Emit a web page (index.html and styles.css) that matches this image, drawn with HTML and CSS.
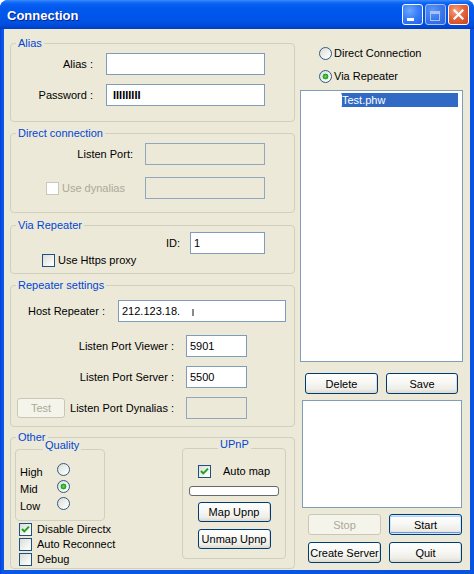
FILE: index.html
```html
<!DOCTYPE html>
<html>
<head>
<meta charset="utf-8">
<title>Connection</title>
<link rel="stylesheet" href="styles.css">
</head>
<body>
<div class="window">
  <div class="titlebar">
    <span class="title">Connection</span>
    <div class="tbtns">
      <span class="tbtn min"><svg width="19" height="19" viewBox="0 0 19 19"><rect x="4" y="13" width="7" height="3" fill="#fff"/></svg></span>
      <span class="tbtn max"><svg width="19" height="19" viewBox="0 0 19 19"><rect x="4.5" y="6.5" width="9" height="9" fill="none" stroke="#A9C2F2" stroke-width="1"/><rect x="4" y="6" width="10" height="3" fill="#A9C2F2"/></svg></span>
      <span class="tbtn close"><svg width="19" height="19" viewBox="0 0 19 19"><path d="M5.5 5.5 L13.5 13.5 M13.5 5.5 L5.5 13.5" stroke="#fff" stroke-width="2.2" stroke-linecap="square"/></svg></span>
    </div>
  </div>
  <div class="client">
    <div class="leftcol">
      <fieldset class="grp g-alias">
        <legend>Alias</legend>
        <div class="form f-alias">
          <span class="lbl">Alias :</span><div class="edit"></div>
          <span class="lbl">Password :</span><div class="edit"><span class="pw">IIIIIIIII</span></div>
        </div>
      </fieldset>
      <fieldset class="grp g-direct">
        <legend>Direct connection</legend>
        <div class="form f-direct">
          <span class="lbl">Listen Port:</span><div class="edit dis"></div>
          <label class="cb dis dyn"><span class="chk dis"></span>Use dynalias</label><div class="edit dis"></div>
        </div>
      </fieldset>
      <fieldset class="grp g-via">
        <legend>Via Repeater</legend>
        <div class="form f-via">
          <span class="lbl">ID:</span><div class="edit">1</div>
          <label class="cb https"><span class="chk"></span>Use Https proxy</label>
        </div>
      </fieldset>
      <fieldset class="grp g-rep">
        <legend>Repeater settings</legend>
        <div class="form f-host">
          <span class="lbl">Host Repeater :</span><div class="edit">212.123.18.<span class="ghost"></span></div>
        </div>
        <div class="form f-ports">
          <span class="lbl">Listen Port Viewer :</span><div class="edit">5901</div>
          <span class="lbl">Listen Port Server :</span><div class="edit">5500</div>
          <div class="dynrow"><button class="btn test" disabled>Test</button><span class="lbl">Listen Port Dynalias :</span></div><div class="edit dis"></div>
        </div>
      </fieldset>
      <fieldset class="grp g-other">
        <legend>Other</legend>
        <div class="other-body">
          <div class="other-left">
            <fieldset class="sub q">
              <legend>Quality</legend>
              <div class="qgrid">
                <span>High</span><span class="rad"></span>
                <span>Mid</span><span class="rad on"></span>
                <span>Low</span><span class="rad"></span>
              </div>
            </fieldset>
            <div class="checks">
              <label class="cb"><span class="chk"><svg width="11" height="11" viewBox="0 0 11 11"><path d="M2 5 L4.3 7.4 L9 2.6" fill="none" stroke="#21A121" stroke-width="2"/></svg></span>Disable Directx</label>
              <label class="cb"><span class="chk"></span>Auto Reconnect</label>
              <label class="cb"><span class="chk"></span>Debug</label>
            </div>
          </div>
          <fieldset class="sub upnp">
            <legend>UPnP</legend>
            <div class="upnp-body">
              <label class="cb automap"><span class="chk"><svg width="11" height="11" viewBox="0 0 11 11"><path d="M2 5 L4.3 7.4 L9 2.6" fill="none" stroke="#21A121" stroke-width="2"/></svg></span>Auto map</label>
              <div class="prog"></div>
              <button class="btn map">Map Upnp</button>
              <button class="btn unmap">Unmap Upnp</button>
            </div>
          </fieldset>
        </div>
      </fieldset>
    </div>
    <div class="rightcol">
      <label class="rb"><span class="rad"></span>Direct Connection</label>
      <label class="rb"><span class="rad on"></span>Via Repeater</label>
      <div class="list"><div class="sel"><span class="blot"></span>Test.phw</div></div>
      <div class="brow r1"><button class="btn w73">Delete</button><button class="btn w72">Save</button></div>
      <div class="log"></div>
      <div class="brow r2"><button class="btn w73" disabled>Stop</button><button class="btn w73 def">Start</button></div>
      <div class="brow r3"><button class="btn w73">Create Server</button><button class="btn w73">Quit</button></div>
    </div>
  </div>
</div>
</body>
</html>
```
FILE: styles.css
```css
* { box-sizing: border-box; }
html, body { margin: 0; padding: 0; background: #ffffff; }
body { font-family: "Liberation Sans", Arial, sans-serif; font-size: 11px; color: #000; }

.btn {
  display: flex; align-items: center; justify-content: center;
  height: 21px; padding: 0; margin: 0;
  font: inherit; color: #000; white-space: nowrap;
  border: 1px solid #003C74; border-radius: 3px;
  background: linear-gradient(to bottom, #FFFFFF 0%, #F7F7F4 45%, #EEEDE7 80%, #DCD8CE 100%);
  box-shadow: inset -1px -1px 0 #E0DCD2;
}
.btn:disabled { color: #ACA899; border-color: #C9C7BA; background: #F5F4EA; box-shadow: none; }
.btn.def { box-shadow: inset 0 0 0 1px #CEE7FF, inset 0 -1px 0 1px #6D94E8, inset 0 1px 0 1px #B8D0F8; }
.w73 { width: 73px; }
.w72 { width: 72px; }

.window {
  width: 474px; height: 574px;
  background: linear-gradient(to right, #0831D9 0, #0A52E0 1px, #0A58E8 3px, #0A52E0 474px);
  border-radius: 8px 8px 0 0;
  display: flex; flex-direction: column; overflow: hidden;
}
.titlebar {
  height: 29px; flex: none;
  display: flex; align-items: flex-start;
  padding: 0 5px 0 7px;
  background: linear-gradient(to bottom, #3D8CFF 0, #1670F8 2px, #0860F2 4px, #0058EE 8px, #0055E8 18px, #004FDF 24px, #0045D2 27px, #003CC2 29px);
}
.title {
  flex: 1; margin-top: 3px; line-height: 26px;
  font-size: 13px; font-weight: bold; color: #fff;
  text-shadow: 1px 1px 0 #0A1E8C;
}
.tbtns { display: flex; gap: 2px; margin-top: 4px; }
.tbtn { display: block; width: 21px; height: 21px; border: 1px solid #fff; border-radius: 3px; }
.tbtn svg { display: block; }
.min { background: radial-gradient(circle at 35% 30%, #6BA8FF 0, #3B80F8 45%, #1F5EE6 100%); }
.max { border-color: #A8C0EE; background: radial-gradient(circle at 35% 30%, #5E98F8 0, #3A78EE 50%, #2A62DE 100%); }
.close { background: radial-gradient(circle at 35% 30%, #F4A282 0, #E5643C 45%, #C9421D 100%); }

.client {
  flex: 1; margin: 0 4px 4px;
  background: #ECE9D8;
  display: grid; grid-template-columns: 285px 163px; column-gap: 5px;
  padding-left: 6px; align-items: start;
}

.leftcol { display: flex; flex-direction: column; padding-top: 8px; }

fieldset { margin: 0; padding: 0; min-width: 0; }
.grp { border: 1px solid #D0D0BF; border-radius: 4px; }
.grp > legend { margin-left: 5px; padding: 0 2px; line-height: 13px; color: #0046D5; }
.g-alias { height: 85px; }
.g-direct { height: 86px; margin-top: 5px; }
.g-via { height: 55px; margin-top: 6px; }
.g-rep { height: 148px; margin-top: 5px; }
.g-other { height: 138px; margin-top: 4px; }

.form { display: grid; align-items: center; }
.lbl { text-align: right; white-space: nowrap; }
.edit {
  height: 22px; border: 1px solid #7F9DB9; background: #fff;
  padding: 0 3px; line-height: 20px; white-space: nowrap; overflow: hidden;
}
.edit.dis { background: #ECE9D8; border-color: #92A7BB; }
.pw { font-weight: bold; margin-left: 3px; }
.ghost { display: inline-block; width: 2px; height: 7px; margin-left: 12px; background: #8A8A8A; vertical-align: -1px; }

.f-alias { grid-template-columns: 82px 159px; column-gap: 13px; row-gap: 9px; padding-top: 3px; }
.f-direct { grid-template-columns: 122px 120px; column-gap: 12px; row-gap: 12px; padding-top: 3px; }
.dyn { justify-self: start; margin-left: 35px; }
.f-via { grid-template-columns: 169px 75px; column-gap: 10px; }
.https { grid-column: 1 / -1; margin-left: 31px; }
.f-host { grid-template-columns: 94px 168px; column-gap: 13px; padding-top: 8px; }
.f-ports { grid-template-columns: 163px 61px; column-gap: 12px; row-gap: 9px; margin-top: 13px; grid-auto-rows: 22px; }
.dynrow { display: flex; align-items: center; justify-content: space-between; }
.btn.test { width: 48px; height: 20px; margin-left: 6px; }

.cb { display: flex; align-items: center; gap: 3px; line-height: 13px; white-space: nowrap; }
.cb.dis { color: #ACA899; }
.chk {
  width: 13px; height: 13px; flex: none;
  border: 1px solid #1C5180;
  background: linear-gradient(135deg, #DCDCD7 0%, #F6F6F3 70%, #FFFFFF 100%);
}
.chk svg { display: block; }
.chk.dis { border-color: #CAC8BB; background: #fff; }
.rad {
  width: 13px; height: 13px; flex: none; border-radius: 50%;
  border: 1px solid #2F5B82;
  background: linear-gradient(135deg, #DCDCD7 0%, #F6F6F3 70%, #FFFFFF 100%);
}
.rad.on {
  background: radial-gradient(circle at 50% 50%, #6FE36B 0, #2DB52A 1.6px, #1E9A1E 2.6px, rgba(30,154,30,0) 3.2px),
              linear-gradient(135deg, #DCDCD7 0%, #F6F6F3 70%, #FFFFFF 100%);
}

.other-body { display: flex; justify-content: space-between; align-items: flex-start; margin-top: -3px; padding: 0 8px 0 4px; }
.other-left { width: 90px; }
.sub { border: 1px solid #D0D0BF; border-radius: 4px; }
.sub > legend { line-height: 9px; padding: 0 2px 8px; color: #0046D5; }
.q { width: 90px; height: 80px; }
.q > legend { margin-left: 27px; }
.qgrid { display: grid; grid-template-columns: 37px 13px; grid-auto-rows: 17px; align-items: center; padding: 5px 0 0 4px; }
.qgrid .rad { margin-bottom: 4px; }
.checks { margin-top: 1px; padding-left: 4px; }
.checks .cb { height: 15px; gap: 5px; }
.upnp { width: 104px; height: 119px; margin-top: -1px; }
.upnp > legend { margin-left: 35px; }
.upnp-body { display: flex; flex-direction: column; align-items: center; }
.automap { margin-top: 8px; gap: 12px; }
.prog { width: 90px; height: 10px; margin-top: 8px; border: 1px solid #686868; border-radius: 3px; background: #fff; }
.btn.map { width: 73px; height: 20px; margin-top: 6px; }
.btn.unmap { width: 73px; height: 20px; margin-top: 7px; }

.rightcol { display: flex; flex-direction: column; padding-top: 18px; }
.rb { display: flex; align-items: center; gap: 2px; line-height: 13px; margin-left: 19px; white-space: nowrap; }
.rb + .rb { margin-top: 10px; }
.list { margin-top: 7px; height: 272px; border: 1px solid #7F9DB9; background: #fff; padding: 2px 4px 0 1px; }
.sel { display: flex; height: 14px; line-height: 14px; background: #316AC5; color: #fff; }
.blot { width: 40px; flex: none; background: #fff; margin: -1px 0; border-radius: 0 4px 3px 0; }
.brow { display: flex; gap: 8px; }
.r1 { margin-top: 11px; padding-left: 5px; }
.log { margin-top: 6px; margin-left: 2px; width: 160px; height: 108px; border: 1px solid #7F9DB9; background: #fff; }
.r2 { margin-top: 6px; padding-left: 8px; }
.r3 { margin-top: 7px; padding-left: 8px; }
```
